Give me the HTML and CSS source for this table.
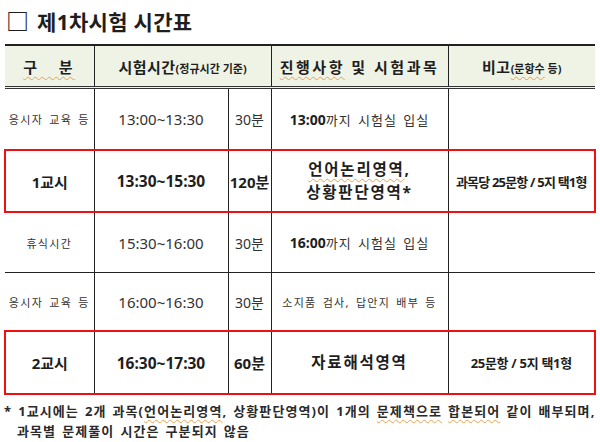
FILE: index.html
```html
<!DOCTYPE html>
<html lang="ko">
<head>
<meta charset="utf-8">
<link rel="stylesheet" href="styles.css">
</head>
<body>
<div class="page">
  <h1 class="title"><span class="box">□</span> 제1차시험 시간표</h1>
  <table class="sched">
    <colgroup>
      <col class="c1"><col class="c2"><col class="c3"><col class="c4"><col class="c5">
    </colgroup>
    <thead>
      <tr class="head">
        <th class="spaced"><span class="sq">구&nbsp;&nbsp;&nbsp;분</span></th>
        <th colspan="2">시험시간<small>(정규시간 기준)</small></th>
        <th class="spaced"><span class="sq">진행사항</span> 및 시험과목</th>
        <th>비고<small class="sq">(문항수</small><small> 등)</small></th>
      </tr>
    </thead>
    <tbody>
      <tr class="row r1">
        <td class="sm">응시자 교육 등</td>
        <td class="time">13:00~13:30</td>
        <td class="dur">30분</td>
        <td class="act"><b>13:00</b>까지 시험실 입실</td>
        <td></td>
      </tr>
      <tr class="row r2 hl">
        <td class="strong">1교시</td>
        <td class="time strong">13:30~15:30</td>
        <td class="dur strong">120분</td>
        <td class="subj"><span class="sq">언어논리영역</span>,<br>상황판단영역*</td>
        <td class="note tight">과목당 25문항 / 5지 택1형</td>
      </tr>
      <tr class="row r3">
        <td class="sm">휴식시간</td>
        <td class="time">15:30~16:00</td>
        <td class="dur">30분</td>
        <td class="act"><b>16:00</b>까지 시험실 입실</td>
        <td></td>
      </tr>
      <tr class="row r4">
        <td class="sm">응시자 교육 등</td>
        <td class="time">16:00~16:30</td>
        <td class="dur">30분</td>
        <td class="sm">소지품 검사, 답안지 배부 등</td>
        <td></td>
      </tr>
      <tr class="row r5 hl">
        <td class="strong">2교시</td>
        <td class="time strong">16:30~17:30</td>
        <td class="dur strong">60분</td>
        <td class="subj">자료해석영역</td>
        <td class="note">25문항 / 5지 택1형</td>
      </tr>
    </tbody>
  </table>
  <div class="foot">
    <p>* 1교시에는 2개 과목(<span class="sq">언어논리영역</span>, 상황판단영역)이 1개의 <span class="sq">문제책으로</span> <span class="sq">합본되어</span> 같이 배부되며,</p>
    <p class="indent">과목별 문제풀이 시간은 구분되지 않음</p>
  </div>
</div>
</body>
</html>
```

FILE: styles.css
```css
html, body {
  margin: 0;
  padding: 0;
  background: #ffffff;
}
body {
  font-family: "Noto Sans", "Noto Sans CJK KR", sans-serif;
  color: #1e1e1e;
}
.page {
  width: 600px;
  height: 442px;
  overflow: hidden;
  padding: 0 0 0 4px;
  box-sizing: border-box;
}
.title {
  margin: 0;
  padding: 5px 0 0 2px;
  height: 40px;
  box-sizing: border-box;
  font-size: 21px;
  font-weight: 700;
  line-height: 30px;
  letter-spacing: 0.3px;
}
.title .box {
  font-family: "Noto Sans CJK KR", sans-serif;
  font-weight: 700;
  font-size: 23px;
  margin-right: 2px;
}
.sched {
  width: 590px;
  border-collapse: collapse;
  table-layout: fixed;
  margin-top: 4px;
}
.c1 { width: 89px; }
.c2 { width: 134px; }
.c3 { width: 43px; }
.c4 { width: 177px; }
.c5 { width: 147px; }
.sched th, .sched td {
  border: 1px solid #222;
  text-align: center;
  vertical-align: middle;
  padding: 0;
}
.sched td:first-child, .sched th:first-child { border-left: none; }
.sched td:last-child, .sched th:last-child { border-right: none; }
.head th {
  background: #eef3e5;
  height: 40px;
  font-size: 15px;
  font-weight: 700;
  border-top: 2px solid #222;
  border-bottom: 3px double #333;
  letter-spacing: 0.5px;
}
.head th small {
  font-size: 11px;
  letter-spacing: 0;
}
.head th.spaced { letter-spacing: 2.5px; }
.r1 td { height: 60px; }
.r2 td { height: 60px; }
.r3 td { height: 59px; }
.r4 td { height: 57px; }
.r5 td { height: 61px; }
.sm {
  font-size: 11px;
  letter-spacing: 1.3px;
  word-spacing: 2px;
  color: #333;
}
.time { font-size: 15px; letter-spacing: 0; color: #333; }
.dur { font-size: 14px; color: #333; }
.act {
  font-size: 13px;
  letter-spacing: 1px;
  word-spacing: 2px;
  color: #333;
}
.act b { font-weight: 700; font-size: 14px; color: #1e1e1e; letter-spacing: 0; }
.strong { font-weight: 700; font-size: 15px; color: #1e1e1e; }
.time.strong { font-size: 15.5px; }
.dur.strong { font-size: 15px; }
.subj {
  font-weight: 700;
  font-size: 15.5px;
  line-height: 23px;
  letter-spacing: 1.8px;
}
.note {
  font-weight: 700;
  font-size: 13px;
  letter-spacing: -0.3px;
}
.note.tight { letter-spacing: -0.8px; }
.hl td {
  border-top: 2px solid #ee1111;
  border-bottom: 2px solid #ee1111;
}
.hl td:first-child { border-left: 2px solid #ee1111; }
.hl td:last-child { border-right: 2px solid #ee1111; }
.sq {
  text-decoration: underline wavy #e8a050;
  text-decoration-thickness: 1px;
  text-underline-offset: 3px;
}
.foot {
  margin-top: 6px;
  font-size: 13px;
  font-weight: 700;
  color: #2a2a2a;
  letter-spacing: 1.1px;
  word-spacing: 1.5px;
}
.foot p {
  margin: 0;
  line-height: 20px;
  white-space: nowrap;
}
.foot .indent { padding-left: 13px; }
```
